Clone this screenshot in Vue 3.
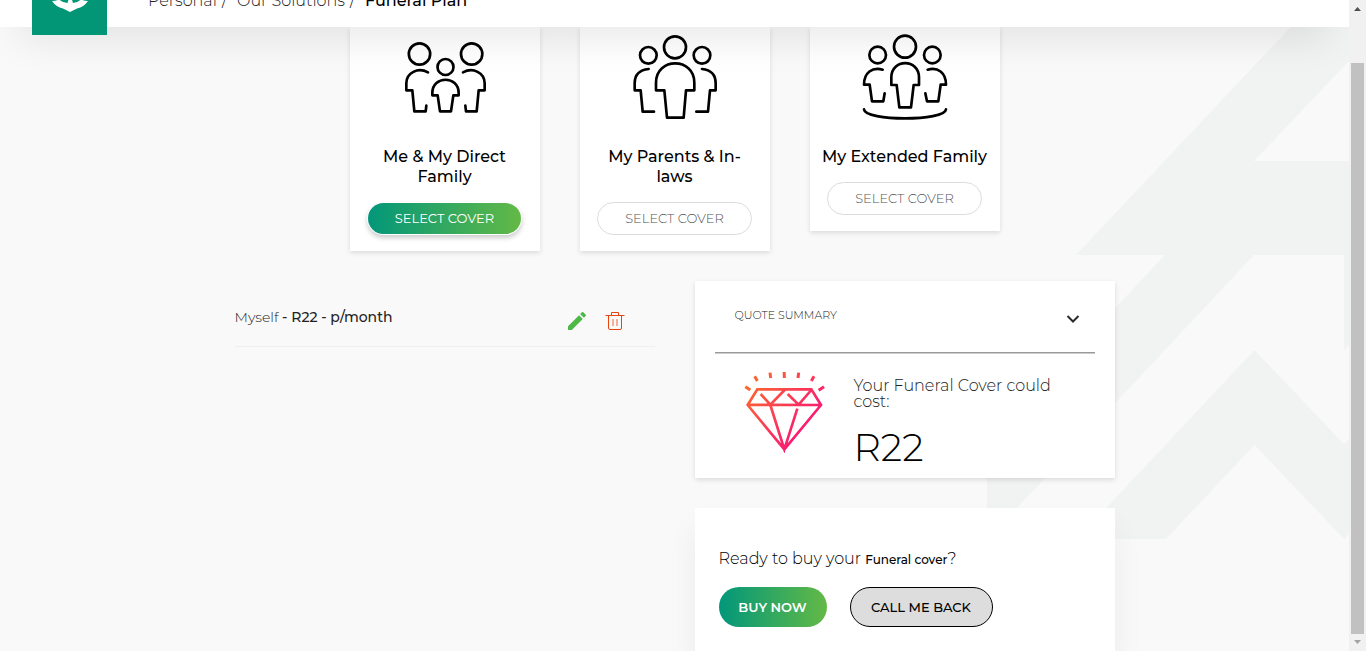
<script setup>
const covers = [
  { id: 'direct', title: 'Me & My Direct Family', selected: true },
  { id: 'parents', title: 'My Parents & In-laws', selected: false },
  { id: 'extended', title: 'My Extended Family', selected: false },
]
</script>

<template>
  <div class="page">
    <div class="content">
      <svg class="backdrop" width="380" height="560" viewBox="969 0 380 560" aria-hidden="true">
        <path d="M1316 0 1076 255H1165L987 444V540L1254 255H1344V350L1349 345V161H1254L1349 61V0ZM1254.500 350 1344 444 1349 439V534L1344 539 1254.500 445 1166 539H1077Z" fill="#f0f3f2" />
      </svg>

      <header class="topbar">
        <a class="logo" href="#" aria-label="Home">
          <svg width="75" height="75" viewBox="0 0 75 75" aria-hidden="true">
            <path d="M20 41Q24 41 27 39.500 31 43 35.500 43L37 38V20H39.500V38L41 43Q45 43 49 39.500 52 41 56 41 52 47 45 48.500L38 52 31 48.500Q24 47 20 41Z" fill="#fff" />
          </svg>
        </a>
        <nav class="crumbs" aria-label="Breadcrumb">
          <a href="#">Personal</a><span class="sep">/</span>
          <a href="#">Our Solutions</a><span class="sep">/</span>
          <span class="current">Funeral Plan</span>
        </nav>
      </header>

      <main>
        <section class="covers">
          <article v-for="cover in covers" :key="cover.id" class="cover">
            <svg class="people" width="88" height="90" viewBox="183 33 264 270" aria-hidden="true">
              <g v-if="cover.id === 'direct'">
                <circle cx="238.500" cy="102" r="32" />
                <circle cx="395" cy="102" r="32" />
                <circle cx="316.500" cy="141" r="24" />
                <path d="M264 157C234 141 199 158 199 190V211H217L223 274H257L259 257" />
                <path d="M369 157C399 141 434 158 434 190V211H416L410 274H378L376 257" />
                <path d="M277 226V219C277 166 356 166 356 219V226H340L333 274H300L293 226Z" />
              </g>
              <g v-else-if="cover.id === 'parents'">
                <circle cx="315" cy="82" r="33" />
                <circle cx="235" cy="106" r="25" />
                <circle cx="396" cy="106" r="25" />
                <path d="M258 211V188C258 111 373 111 373 188V211H348L341 293H291L283 211Z" />
                <path d="M236 147Q194 151 194 190V211H212L218 275H252" />
                <path d="M396 147Q437 151 437 190V211H420L414 275H379" />
              </g>
              <g v-else>
                <circle cx="315" cy="80" r="33" />
                <circle cx="233" cy="105" r="25" />
                <circle cx="397" cy="105" r="25" />
                <path d="M274 195V172C274 115 357 115 357 172V195H341L333 262H298L290 195Z" />
                <path d="M248 149C217 140 192 158 192 194H209L216 244H250L254 220" />
                <path d="M383 149C413 140 438 158 438 194H422L415 244H381L376 220" />
                <path d="M192 268C195 304 435 304 438 268" />
              </g>
            </svg>
            <h2>{{ cover.title }}</h2>
            <button type="button" class="select" :class="{ selected: cover.selected }">SELECT COVER</button>
          </article>
        </section>

        <div class="columns">
          <section class="members">
            <div class="member">
              <p>Myself <strong>- R22 - p/month</strong></p>
              <div class="actions">
                <button type="button" class="icon-button" aria-label="Edit">
                  <svg width="24" height="24" viewBox="0 0 24 24" aria-hidden="true">
                    <path d="M3 17.250V21H6.750L17.810 9.940 14.060 6.190ZM20.710 7.040A1 1 0 0 0 20.710 5.630L18.370 3.290A1 1 0 0 0 16.960 3.290L15.130 5.120 18.880 8.870Z" fill="#4db848" />
                  </svg>
                </button>
                <button type="button" class="icon-button" aria-label="Delete">
                  <svg width="24" height="24" viewBox="0 0 24 24" fill="none" stroke="#e8430f" aria-hidden="true">
                    <path d="M2.500 6.500H21.500M8.500 6V3.500H15.500V6M5.500 6.500V19Q5.500 20.500 7 20.500H17Q18.500 20.500 18.500 19V6.500" />
                    <path d="M10 10V17M14 10V17" stroke-opacity=".8" />
                  </svg>
                </button>
              </div>
            </div>
          </section>

          <aside class="side">
            <section class="quote">
              <button type="button" class="quote-toggle">
                <span>QUOTE SUMMARY</span>
                <svg width="14" height="10" viewBox="0 0 14 10" aria-hidden="true">
                  <path d="M1.500 2 7 7.500 12.500 2" fill="none" stroke="#2b2b2b" stroke-width="2" />
                </svg>
              </button>
              <hr />
              <div class="quote-body">
                <svg class="gem" width="82" height="82" viewBox="44 18 246 246" aria-hidden="true">
                  <defs>
                    <linearGradient id="gemFill" gradientUnits="userSpaceOnUse" x1="70" y1="60" x2="225" y2="185">
                      <stop offset="0" stop-color="#fc6530" />
                      <stop offset="1" stop-color="#f91d70" />
                    </linearGradient>
                  </defs>
                  <g fill="none" stroke="url(#gemFill)" stroke-width="8">
                    <path d="M84 73H246L275 120 165 253 55 120ZM55 119.500 275 120M94 87 123 119 166 75M175 87 208 119 246 75M123 120 165 253 204 131" />
                    <path d="M48 65 63 75M76 34 84 48M122 23 124 39M164.500 21 165 39M208 23 206 39M254 34 246 48M284 65 268 76" stroke-width="9" />
                  </g>
                </svg>
                <div>
                  <p class="quote-text">Your Funeral Cover could cost:</p>
                  <p class="price">R22</p>
                </div>
              </div>
            </section>

            <section class="buy">
              <p>Ready to buy your <strong>Funeral cover</strong>?</p>
              <div class="buy-actions">
                <button type="button" class="buy-now">BUY NOW</button>
                <button type="button" class="call">CALL ME BACK</button>
              </div>
            </section>
          </aside>
        </div>
      </main>
    </div>

    <div class="scrollbar" aria-hidden="true">
      <svg width="17" height="17" viewBox="0 0 17 17"><path d="M5 11H12L8.500 7Z" fill="#505050" /></svg>
      <div class="thumb"></div>
      <svg width="17" height="17" viewBox="0 0 17 17"><path d="M5 6H12L8.500 10Z" fill="#a3a3a3" /></svg>
    </div>
  </div>
</template>

<style>
body {
  margin: 0;
  background: #f9f9f9;
}
</style>

<style scoped>
* {
  box-sizing: border-box;
}
.page {
  display: flex;
  height: 100vh;
  overflow: hidden;
  font-family: Montserrat, Inter, "Liberation Sans", sans-serif;
  font-weight: 300;
  color: #000;
}
.content {
  position: relative;
  flex: 1;
  display: flex;
  flex-direction: column;
  overflow: hidden;
  background: #f9f9f9;
}
.backdrop {
  position: absolute;
  top: 0;
  right: 0;
}
.topbar {
  position: relative;
  z-index: 2;
  display: flex;
  flex-shrink: 0;
  align-items: flex-end;
  gap: 41px;
  height: 80px;
  margin-top: -53px;
  padding-left: 32px;
  background: #fff;
  box-shadow: 0 30px 40px -20px rgba(0, 0, 0, 0.1);
}
.logo {
  height: 75px;
  margin-bottom: -8px;
  background: #029676;
}
.logo svg {
  display: block;
}
.crumbs {
  display: flex;
  padding-bottom: 16px;
  font-size: 16px;
  line-height: 20px;
}
.crumbs a {
  color: #222;
  text-decoration: none;
}
.sep {
  margin: 0 10px 0 5px;
}
.current {
  font-weight: 500;
}
button {
  font-family: inherit;
  cursor: pointer;
}
h2,
p {
  margin: 0;
}
main {
  position: relative;
  display: flex;
  flex: 1;
  flex-direction: column;
}
.covers {
  display: flex;
  align-items: flex-start;
  justify-content: center;
  gap: 40px;
  min-height: 224px;
}
.cover {
  display: flex;
  flex-direction: column;
  align-items: center;
  width: 190px;
  padding: 4px 12px 16px;
  background: #fff;
  box-shadow: 0 2px 5px rgba(0, 0, 0, 0.12);
}
.people {
  fill: none;
  stroke: #000;
  stroke-width: 8;
  stroke-linecap: round;
  stroke-linejoin: round;
}
.cover h2 {
  margin: 26px 0 15px;
  font-size: 16px;
  font-weight: 500;
  line-height: 20px;
  text-align: center;
}
.select {
  width: 155px;
  height: 33px;
  padding: 0 0 2px;
  border: 1px solid #dcdcdc;
  border-radius: 17px;
  background: #fff;
  color: #555;
  font-size: 13px;
  font-weight: 300;
}
.selected {
  border-color: transparent;
  background: linear-gradient(90deg, #02977a, #63b946) padding-box;
  color: #fff;
  font-weight: 400;
  box-shadow: 0 3px 5px rgba(0, 0, 0, 0.2);
}
.columns {
  display: grid;
  flex: 1;
  grid-template-columns: repeat(2, 420px);
  justify-content: center;
  gap: 40px;
  margin-top: 30px;
}
.member {
  display: flex;
  justify-content: space-between;
  height: 66px;
  padding: 26px 28px 0 0;
  border-bottom: 1px solid #efefef;
  font-size: 14px;
  line-height: 20px;
  color: #222;
}
.member strong {
  font-weight: 500;
}
.actions {
  display: flex;
  gap: 14px;
  padding-top: 2px;
}
.icon-button {
  width: 24px;
  height: 24px;
  padding: 0;
  border: 0;
  background: none;
}
.side {
  display: flex;
  flex-direction: column;
  gap: 30px;
}
.quote {
  padding: 0 20px 9px;
  background: #fff;
  box-shadow: 0 2px 5px rgba(0, 0, 0, 0.12);
}
.quote-toggle {
  display: flex;
  align-items: center;
  justify-content: space-between;
  width: 100%;
  height: 71px;
  padding: 0 15px 0 20px;
  border: 0;
  background: none;
  color: #222;
  font-size: 11px;
  font-weight: 300;
}
.quote-toggle span {
  padding-bottom: 4px;
}
.quote-toggle svg {
  margin-top: 4px;
}
hr {
  height: 2px;
  margin: 0;
  border: 0;
  border-top: 1px solid #999;
  background: #ccc;
}
.quote-body {
  display: flex;
  gap: 28px;
  padding: 17px 20px 0 29px;
}
.gem {
  flex-shrink: 0;
}
.quote-text {
  padding-top: 7px;
  font-size: 16px;
  line-height: 16px;
  color: #222;
}
.price {
  margin-top: 17px;
  font-size: 38px;
  line-height: 42px;
}
.buy {
  flex: 1;
  padding: 41px 24px 24px;
  background: #fff;
  box-shadow: 0 20px 30px rgba(0, 0, 0, 0.06);
}
.buy p {
  font-size: 16px;
  line-height: 20px;
}
.buy strong {
  font-size: 12px;
  font-weight: 500;
}
.buy-actions {
  display: flex;
  gap: 23px;
  margin-top: 17px;
}
.buy-actions button {
  height: 40px;
  padding: 0;
  border-radius: 20px;
  font-size: 13px;
}
.buy-actions .buy-now {
  width: 108px;
  border: 0;
  background: linear-gradient(90deg, #02977a, #63b946);
  color: #fff;
  font-weight: 600;
}
.buy-actions .call {
  width: 143px;
  border: 1px solid #000;
  background: #ddd;
  color: #000;
  font-weight: 500;
}
.scrollbar {
  display: flex;
  flex-direction: column;
  width: 17px;
  background: #f1f1f1;
}
.thumb {
  flex: 1;
  margin: 46px 2px 0;
  background: #c1c1c1;
}
</style>
